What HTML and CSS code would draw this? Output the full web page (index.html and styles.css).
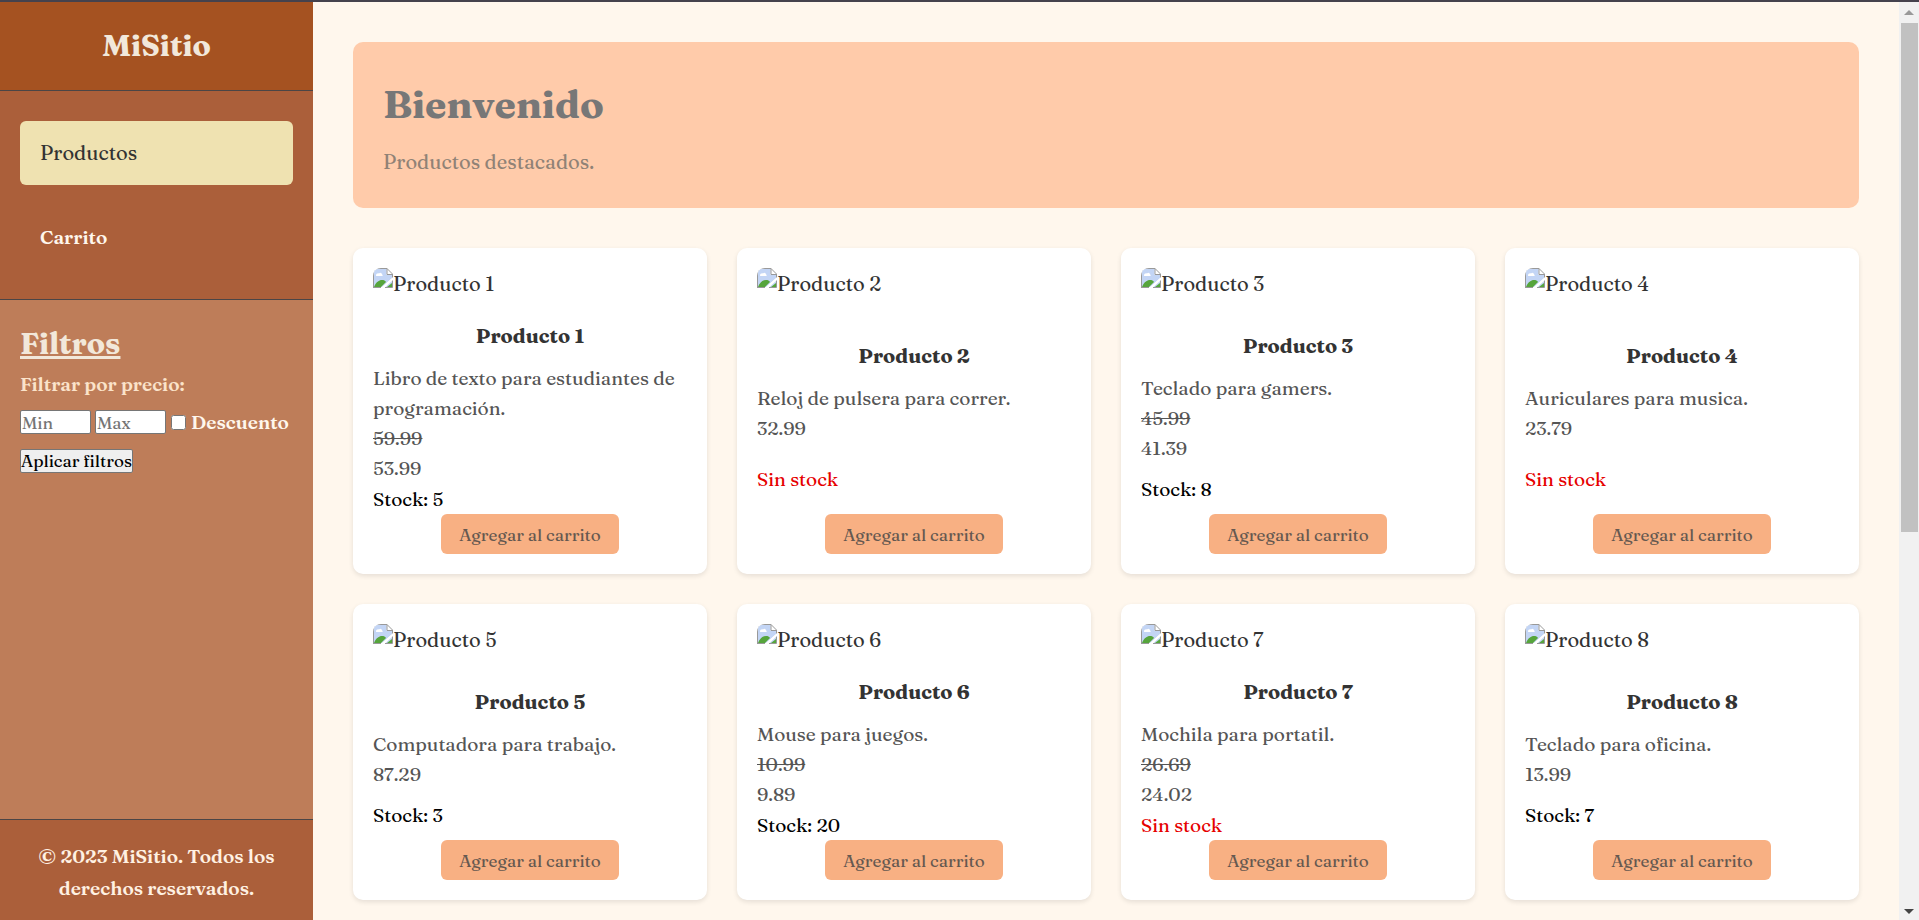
FILE: index.html
```
<!DOCTYPE html>
<html lang="es">
<head>
<meta charset="utf-8">
<title>MiSitio</title>
<link rel="stylesheet" href="styles.css">
</head>
<body>
<svg class="defs" width="0" height="0" aria-hidden="true">
  <symbol id="broken" viewBox="0 0 20 20">
    <path d="M0 0H14L20 6V20H0Z" fill="#fff"/>
    <path d="M1 1H13.500V7H19V10L9 19H1Z" fill="#c3d5f5"/>
    <path d="M3 7.500C3 6 4.500 5 6 5.500C7 4 9 5 9 6.500C10 6.500 10 8 9 8H4C3.500 8 3 8 3 7.500Z" fill="#fff"/>
    <path d="M1 19C3 14 6 12 9 12C11 12 12 12.500 13 14L8 19Z" fill="#56a53c"/>
    <path d="M12 19L19 12.500V19Z" fill="#c3d5f5"/>
    <path d="M14 19L19 15V19Z" fill="#56a53c"/>
    <path d="M8 20L20 9.500V12L11.500 20Z" fill="#fff"/>
    <path d="M.5 20V4Q1 1 4 .5H14L19.500 6V9.500M14 .5V6.500H19.500M19.500 12.500V19.500H12M0 19.500H8" fill="none" stroke="#999" stroke-width="1"/>
  </symbol>
</svg>
<div class="layout">
  <aside class="sidebar">
    <header class="brand"><h2 class="brand-name">MiSitio</h2></header>
    <nav class="nav">
      <a class="nav-link active" href="#productos">Productos</a>
      <a class="nav-link" href="#carrito">Carrito</a>
    </nav>
    <form class="filters">
      <h2 class="filters-title">Filtros</h2>
      <label class="filters-label" for="min">Filtrar por precio:</label>
      <div class="filters-row">
        <input class="price" id="min" type="text" placeholder="Min">
        <input class="price" id="max" type="text" placeholder="Max" aria-label="Precio máximo">
        <input class="check" id="desc" type="checkbox">
        <label class="check-label" for="desc">Descuento</label>
      </div>
      <button class="apply" type="button">Aplicar filtros</button>
    </form>
    <footer class="footer">© 2023 MiSitio. Todos los derechos reservados.</footer>
  </aside>
  <main class="main">
    <section class="hero">
      <h1 class="hero-title">Bienvenido</h1>
      <p class="hero-text">Productos destacados.</p>
    </section>
    <section class="grid" id="productos">
      <article class="card">
        <div class="photo"><svg class="photo-icon"><use href="#broken"/></svg><span>Producto 1</span></div>
        <div><h3 class="name">Producto 1</h3><p class="text">Libro de texto para estudiantes de programación.</p><p class="text"><s>59.99</s></p><p class="text">53.99</p></div>
        <p class="stock">Stock: 5</p>
        <button class="add" type="button">Agregar al carrito</button>
      </article>
      <article class="card">
        <div class="photo"><svg class="photo-icon"><use href="#broken"/></svg><span>Producto 2</span></div>
        <div><h3 class="name">Producto 2</h3><p class="text">Reloj de pulsera para correr.</p><p class="text">32.99</p></div>
        <p class="stock out">Sin stock</p>
        <button class="add" type="button">Agregar al carrito</button>
      </article>
      <article class="card">
        <div class="photo"><svg class="photo-icon"><use href="#broken"/></svg><span>Producto 3</span></div>
        <div><h3 class="name">Producto 3</h3><p class="text">Teclado para gamers.</p><p class="text"><s>45.99</s></p><p class="text">41.39</p></div>
        <p class="stock">Stock: 8</p>
        <button class="add" type="button">Agregar al carrito</button>
      </article>
      <article class="card">
        <div class="photo"><svg class="photo-icon"><use href="#broken"/></svg><span>Producto 4</span></div>
        <div><h3 class="name">Producto 4</h3><p class="text">Auriculares para musica.</p><p class="text">23.79</p></div>
        <p class="stock out">Sin stock</p>
        <button class="add" type="button">Agregar al carrito</button>
      </article>
      <article class="card">
        <div class="photo"><svg class="photo-icon"><use href="#broken"/></svg><span>Producto 5</span></div>
        <div><h3 class="name">Producto 5</h3><p class="text">Computadora para trabajo.</p><p class="text">87.29</p></div>
        <p class="stock">Stock: 3</p>
        <button class="add" type="button">Agregar al carrito</button>
      </article>
      <article class="card">
        <div class="photo"><svg class="photo-icon"><use href="#broken"/></svg><span>Producto 6</span></div>
        <div><h3 class="name">Producto 6</h3><p class="text">Mouse para juegos.</p><p class="text"><s>10.99</s></p><p class="text">9.89</p></div>
        <p class="stock">Stock: 20</p>
        <button class="add" type="button">Agregar al carrito</button>
      </article>
      <article class="card">
        <div class="photo"><svg class="photo-icon"><use href="#broken"/></svg><span>Producto 7</span></div>
        <div><h3 class="name">Producto 7</h3><p class="text">Mochila para portatil.</p><p class="text"><s>26.69</s></p><p class="text">24.02</p></div>
        <p class="stock out">Sin stock</p>
        <button class="add" type="button">Agregar al carrito</button>
      </article>
      <article class="card">
        <div class="photo"><svg class="photo-icon"><use href="#broken"/></svg><span>Producto 8</span></div>
        <div><h3 class="name">Producto 8</h3><p class="text">Teclado para oficina.</p><p class="text">13.99</p></div>
        <p class="stock">Stock: 7</p>
        <button class="add" type="button">Agregar al carrito</button>
      </article>
    </section>
  </main>
  <div class="scroll" aria-hidden="true">
    <svg class="arrow" viewBox="0 0 10 5"><path d="M0 5L5 0L10 5Z" fill="#999"/></svg>
    <div class="track"><div class="thumb"></div></div>
    <svg class="arrow" viewBox="0 0 10 5"><path d="M0 0L5 5L10 0Z" fill="#444"/></svg>
  </div>
</div>
</body>
</html>
```
FILE: styles.css
```
* {
  box-sizing: border-box;
  margin: 0;
  padding: 0;
}

body {
  font-family: Fraunces, "Liberation Serif", serif;
  font-size: 20px;
  line-height: 32px;
  color: #333;
  background: #fff7ed;
}

button,
input {
  font-family: inherit;
  font-size: 17px;
}

.defs {
  display: block;
}

.layout {
  display: flex;
  height: 100vh;
  overflow: hidden;
  border-top: 2px solid #45424d;
}

.sidebar {
  display: flex;
  flex-direction: column;
  flex: 0 0 313px;
  background: #be7d59;
}

.brand {
  padding: 20px;
  text-align: center;
  background: #a55221;
  border-bottom: 1px solid #4b4546;
}

.brand-name,
.filters-title {
  font-size: 30px;
  line-height: 48px;
  color: #f2e8da;
}

.nav {
  display: flex;
  flex-direction: column;
  gap: 20px;
  padding: 30px 20px;
  background: #ab5f3a;
  border-bottom: 1px solid #4b4546;
}

.nav-link {
  padding: 16px 20px;
  border-radius: 6px;
  font-size: 19px;
  font-weight: 600;
  color: #fff7ed;
  text-decoration: none;
}

.nav-link.active {
  font-size: 20px;
  font-weight: 400;
  color: #333;
  background: #efe2b1;
}

.filters {
  flex: 1;
  padding: 20px;
}

.filters-title {
  text-decoration: underline;
}

.filters-label {
  display: block;
  font-size: 19px;
  font-weight: 600;
  color: #fbe3ca;
}

.filters-row {
  display: flex;
  align-items: center;
  gap: 4px;
  padding: 6px 0 11px;
  white-space: nowrap;
}

.price {
  width: 71px;
  height: 24px;
  padding: 0 1px;
  border: 1px solid #767676;
  border-radius: 2px;
  background: #fff;
}

.price::placeholder {
  color: #757575;
}

.check {
  width: 15px;
  height: 15px;
  margin: 0 1px;
}

.check-label {
  font-size: 19px;
  font-weight: 600;
  color: #fff7ed;
}

.apply {
  display: block;
  height: 24px;
  line-height: 22px;
  color: #000;
  background: #efefef;
  border: 1px solid #767676;
  border-radius: 2px;
}

.footer {
  padding: 20px 20px 16px;
  font-size: 19px;
  font-weight: 600;
  text-align: center;
  color: #fff1e2;
  background: #ab5f3a;
  border-top: 1px solid #4b4546;
}

.main {
  flex: 1;
  min-width: 0;
  padding: 40px;
}

.hero {
  padding: 30px;
  margin-bottom: 40px;
  border-radius: 10px;
  background: #ffcbaa;
}

.hero-title {
  margin-bottom: 10px;
  font-size: 39px;
  line-height: 64px;
  color: #777;
}

.hero-text {
  color: #908276;
}

.grid {
  display: grid;
  grid-template-columns: repeat(4, 1fr);
  gap: 30px;
}

.card {
  display: flex;
  flex-direction: column;
  justify-content: space-between;
  padding: 20px;
  border-radius: 10px;
  background: #fff;
  box-shadow: 0 2px 5px rgba(0, 0, 0, 0.1);
}

.photo {
  display: flex;
  align-items: flex-start;
}

.photo-icon {
  width: 20px;
  height: 20px;
  border-radius: 8px 0 0 0;
}

.name {
  margin: 20px 0 11px;
  font-size: 20px;
  text-align: center;
}

.text,
.stock {
  font-size: 19px;
  line-height: 30px;
}

.text {
  color: #555;
}

.stock {
  padding-top: 1px;
  color: #000;
}

.stock.out {
  color: #e60000;
}

.add {
  align-self: center;
  height: 40px;
  padding: 0 18px;
  color: #655850;
  background: #f8b083;
  border: 0;
  border-radius: 6px;
}

.scroll {
  display: flex;
  flex-direction: column;
  align-items: center;
  flex: 0 0 20px;
  gap: 8px;
  padding: 8px 0 6px;
  background: #f1f1f1;
}

.arrow {
  width: 10px;
  height: 5px;
}

.track {
  flex: 1;
}

.thumb {
  width: 17px;
  height: 58%;
  background: #c1c1c1;
}
```
